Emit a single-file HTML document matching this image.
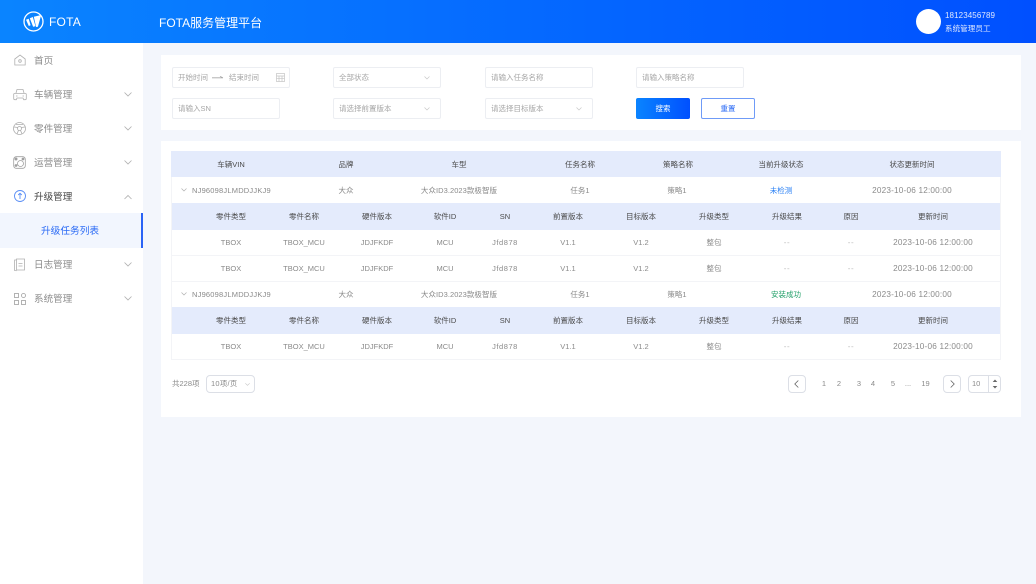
<!DOCTYPE html>
<html lang="zh"><head><meta charset="utf-8"><title>FOTA</title>
<style>
*{box-sizing:border-box}
html,body{margin:0;padding:0}
body{width:1036px;height:584px;overflow:hidden;position:relative;background:#f3f6fc;font-family:"Liberation Sans","Noto Sans CJK SC",sans-serif;color:#8a8a8a}
.a{position:absolute}
.t{position:absolute;white-space:nowrap;line-height:12px;height:12px}
.c{transform:translateX(-50%)}
#hd{left:0;top:0;width:1036px;height:43px;background:linear-gradient(90deg,#0a84ff 0%,#0050ff 100%)}
#sd{left:0;top:43px;width:143px;height:541px;background:#fff}
.m{font-size:9.6px;left:34px;color:#8c8c8c}
.card{background:#fff;left:161px;width:860px}
.f{border:1px solid #eceef2;border-radius:2px;height:21px;background:#fff}
.ph{font-size:7.5px;color:#a6a6a6}
.th{font-size:7.5px;color:#4a4a4a;font-weight:400}
.td{font-size:7.5px;color:#8a8a8a}
.d{font-size:8.2px;letter-spacing:.2px}
.j{letter-spacing:.55px}
.n{color:#bdbdbd;font-size:8px;letter-spacing:.6px}
.bar{left:171px;width:830px;background:#e4ebfc}
.ln{left:171px;width:830px;height:1px;background:#f3f4f7}
svg{position:absolute;overflow:visible;fill:none}
.pg{font-size:7.5px;color:#8a8a8a}
</style></head><body>
<div id="hd" class="a"></div>
<svg style="left:23px;top:11px" width="21" height="21" viewBox="0 0 21 21"><circle cx="10.5" cy="10.5" r="9.5" stroke="#fff" stroke-width="1.3"/><path d="M3 8.700l2.700-.9 1.900 6.500-1.800.7zM6.800 7.300l3-1.300 2.700 9.300-2.400.5zM10.800 5.700l7.400-1.700-3.300 11.800-1.800.2z" fill="#fff"/></svg>
<div class="t" style="left:49px;top:16px;font-size:12px;color:#fff;line-height:13px;height:13px;letter-spacing:.2px">FOTA</div>
<div class="t" style="left:159px;top:15.5px;font-size:12px;color:#fff;line-height:14px;height:14px">FOTA服务管理平台</div>
<div class="a" style="left:916px;top:9px;width:25px;height:25px;border-radius:50%;background:#fff"></div>
<div class="t" style="left:945px;top:10px;font-size:8px;color:#dfe8ff;letter-spacing:.1px">18123456789</div>
<div class="t" style="left:945px;top:22.500px;font-size:7.6px;color:#dfe8ff">系统管理员工</div>

<div id="sd" class="a"></div>
<div class="a" style="left:0;top:213px;width:143px;height:35px;background:#f2f6fe"></div>
<div class="a" style="left:141px;top:213px;width:2px;height:35px;background:#2a63f5"></div>
<div class="t m" style="top:55.500px">首页</div>
<div class="t m" style="top:89.500px">车辆管理</div>
<div class="t m" style="top:123.500px">零件管理</div>
<div class="t m" style="top:157.500px">运营管理</div>
<div class="t m" style="top:191.500px;color:#444">升级管理</div>
<div class="t" style="left:41px;top:225.500px;font-size:9.7px;color:#2a6af5">升级任务列表</div>
<div class="t m" style="top:259.500px">日志管理</div>
<div class="t m" style="top:293.500px">系统管理</div>
<!-- sidebar icons -->
<svg style="left:14px;top:54px" width="12" height="12" viewBox="0 0 12 12" stroke="#b0b0b0" stroke-width=".8"><path d="M.8 5L6 1l5.2 4v6H.8z"/><circle cx="6" cy="7" r="1.3"/></svg>
<svg style="left:13px;top:88px" width="14" height="13" viewBox="0 0 14 13" stroke="#b0b0b0" stroke-width=".8"><path d="M3 5l1-3.500h6L11 5M1.500 5.500h11c.6 0 .8.4.8 1v4c0 .8-.5 1.200-1.200 1.200h-1.400L10 10H4l-.7 1.700H1.900c-.7 0-1.200-.4-1.200-1.200v-4c0-.6.2-1 .8-1z"/><path d="M3 8h1.500M9.500 8H11"/></svg>
<svg style="left:13px;top:122px" width="13" height="13" viewBox="0 0 13 13" stroke="#adadad" stroke-width=".8"><circle cx="6.500" cy="6.500" r="6"/><circle cx="6.500" cy="6.500" r="2"/><path d="M1 5l3.700.5M12 5l-3.700.5M5.500 8.300L4 12M7.500 8.300L9 12M3 2.500h7"/></svg>
<svg style="left:13px;top:156px" width="13" height="13" viewBox="0 0 13 13" stroke="#a0a0a0" stroke-width=".8"><rect x=".7" y=".7" width="11.600" height="11.600" rx="2.500"/><circle cx="7.500" cy="7.500" r="3"/><circle cx="3" cy="3" r="1.100" fill="#a0a0a0"/><circle cx="3" cy="9.500" r="1" fill="#a0a0a0"/><circle cx="10" cy="3" r="1" fill="#a0a0a0"/></svg>
<svg style="left:14px;top:190px" width="12" height="12" viewBox="0 0 12 12" stroke="#5a8ef5" stroke-width=".9"><circle cx="6" cy="6" r="5.500"/><path d="M6 9V3.500M4.200 5L6 3.200 7.800 5"/></svg>
<svg style="left:14px;top:258px" width="11" height="13" viewBox="0 0 11 13" stroke="#b0b0b0" stroke-width=".8"><path d="M2.500 1h8v11h-8zM2.500 2H.6v10.500l2 .2"/><path d="M4.500 5.500h4M4.500 8h4"/></svg>
<svg style="left:14px;top:293px" width="12" height="12" viewBox="0 0 12 12" stroke="#a0a0a0" stroke-width=".8"><rect x=".5" y=".5" width="4" height="4"/><rect x=".5" y="7.500" width="4" height="4"/><circle cx="9.500" cy="2.500" r="2"/><rect x="7.500" y="7.500" width="4" height="4"/></svg>
<!-- chevrons -->
<svg style="left:124px;top:92px" width="8" height="5" stroke="#b0b0b0" stroke-width=".8"><path d="M.5.500L4 4 7.500.500"/></svg>
<svg style="left:124px;top:126px" width="8" height="5" stroke="#b0b0b0" stroke-width=".8"><path d="M.5.500L4 4 7.500.500"/></svg>
<svg style="left:124px;top:160px" width="8" height="5" stroke="#b0b0b0" stroke-width=".8"><path d="M.5.500L4 4 7.500.500"/></svg>
<svg style="left:124px;top:195px" width="8" height="5" stroke="#b0b0b0" stroke-width=".8"><path d="M.5 4L4 .5 7.500 4"/></svg>
<svg style="left:124px;top:262px" width="8" height="5" stroke="#b0b0b0" stroke-width=".8"><path d="M.5.500L4 4 7.500.500"/></svg>
<svg style="left:124px;top:296px" width="8" height="5" stroke="#b0b0b0" stroke-width=".8"><path d="M.5.500L4 4 7.500.500"/></svg>

<!-- filter card -->
<div class="a card" style="top:55px;height:75px"></div>
<div class="a f" style="left:172px;top:67px;width:118px"></div>
<div class="t ph" style="left:178px;top:71.500px">开始时间</div>
<svg style="left:212px;top:76px" width="12" height="3" stroke="#a6a6a6" stroke-width=".8"><path d="M0 1.800h11M8 .3l3 1.500"/></svg>
<div class="t ph" style="left:229px;top:71.500px">结束时间</div>
<svg style="left:276px;top:73px" width="9" height="9" stroke="#c4c4c4" stroke-width=".7"><rect x=".5" y=".5" width="8" height="8"/><path d="M.5 3h8M3 3v5.500M6 3v5.500M.5 5.700h8"/></svg>
<div class="a f" style="left:333px;top:67px;width:108px"></div>
<div class="t ph" style="left:339px;top:71.500px">全部状态</div>
<svg style="left:424px;top:76px" width="6" height="4" stroke="#c8c8c8" stroke-width=".7"><path d="M.5.500L3 3 5.500.500"/></svg>
<div class="a f" style="left:485px;top:67px;width:108px"></div>
<div class="t ph" style="left:491px;top:71.500px">请输入任务名称</div>
<div class="a f" style="left:636px;top:67px;width:108px"></div>
<div class="t ph" style="left:642px;top:71.500px">请输入策略名称</div>
<div class="a f" style="left:172px;top:98px;width:108px"></div>
<div class="t ph" style="left:178px;top:102.500px">请输入SN</div>
<div class="a f" style="left:333px;top:98px;width:108px"></div>
<div class="t ph" style="left:339px;top:102.500px">请选择前置版本</div>
<svg style="left:424px;top:107px" width="6" height="4" stroke="#c8c8c8" stroke-width=".7"><path d="M.5.500L3 3 5.500.500"/></svg>
<div class="a f" style="left:485px;top:98px;width:108px"></div>
<div class="t ph" style="left:491px;top:102.500px">请选择目标版本</div>
<svg style="left:576px;top:107px" width="6" height="4" stroke="#c8c8c8" stroke-width=".7"><path d="M.5.500L3 3 5.500.500"/></svg>
<div class="a" style="left:636px;top:98px;width:54px;height:21px;border-radius:2px;background:linear-gradient(90deg,#0a84ff,#0050ff)"></div>
<div class="t c" style="left:663px;top:102.500px;font-size:7.500px;color:#fff">搜索</div>
<div class="a" style="left:701px;top:98px;width:54px;height:21px;border-radius:2px;background:#fff;border:1px solid #6f9bf7"></div>
<div class="t c" style="left:728px;top:102.500px;font-size:7.500px;color:#2a6af5">重置</div>

<!-- table card -->
<div class="a card" style="top:141px;height:276px"></div>
<div class="a bar" style="top:151px;height:26px"></div>
<div class="a bar" style="top:203px;height:26.500px"></div>
<div class="a bar" style="top:307px;height:26.500px"></div>
<div class="a ln" style="top:255px"></div>
<div class="a ln" style="top:281px"></div>
<div class="a ln" style="top:358.500px"></div>
<div class="a" style="left:171px;top:177px;width:1px;height:182px;background:#f3f4f7"></div>
<div class="a" style="left:1000px;top:177px;width:1px;height:182px;background:#f3f4f7"></div>

<div class="t th c" style="left:231px;top:158.500px">车辆VIN</div>
<div class="t th c" style="left:346px;top:158.500px">品牌</div>
<div class="t th c" style="left:459px;top:158.500px">车型</div>
<div class="t th c" style="left:580px;top:158.500px">任务名称</div>
<div class="t th c" style="left:678px;top:158.500px">策略名称</div>
<div class="t th c" style="left:781px;top:158.500px">当前升级状态</div>
<div class="t th c" style="left:912px;top:158.500px">状态更新时间</div>

<svg style="left:181px;top:188px" width="6" height="4" stroke="#b0b0b0" stroke-width=".7"><path d="M.5.500L3 3 5.500.500"/></svg>
<div class="t td" style="left:192px;top:184.500px;letter-spacing:.2px">NJ96098JLMDDJJKJ9</div>
<div class="t td c" style="left:346px;top:184.500px">大众</div>
<div class="t td c" style="left:459px;top:184.500px;letter-spacing:.05px">大众ID3.2023款极智版</div>
<div class="t td c" style="left:580px;top:184.500px">任务1</div>
<div class="t td c" style="left:677px;top:184.500px">策略1</div>
<div class="t td c" style="left:781px;top:184.500px;color:#2a80f5">未检测</div>
<div class="t td c d" style="left:912px;top:184.500px">2023-10-06 12:00:00</div>

<div class="t th c" style="left:231px;top:210.500px">零件类型</div>
<div class="t th c" style="left:304px;top:210.500px">零件名称</div>
<div class="t th c" style="left:377px;top:210.500px">硬件版本</div>
<div class="t th c" style="left:445px;top:210.500px">软件ID</div>
<div class="t th c" style="left:505px;top:210.500px">SN</div>
<div class="t th c" style="left:568px;top:210.500px">前置版本</div>
<div class="t th c" style="left:641px;top:210.500px">目标版本</div>
<div class="t th c" style="left:714px;top:210.500px">升级类型</div>
<div class="t th c" style="left:787px;top:210.500px">升级结果</div>
<div class="t th c" style="left:851px;top:210.500px">原因</div>
<div class="t th c" style="left:933px;top:210.500px">更新时间</div>

<div class="t td c" style="left:231px;top:236.500px">TBOX</div>
<div class="t td c" style="left:304px;top:236.500px">TBOX_MCU</div>
<div class="t td c" style="left:377px;top:236.500px">JDJFKDF</div>
<div class="t td c" style="left:445px;top:236.500px">MCU</div>
<div class="t td c j" style="left:505px;top:236.500px">Jfd878</div>
<div class="t td c" style="left:568px;top:236.500px">V1.1</div>
<div class="t td c" style="left:641px;top:236.500px">V1.2</div>
<div class="t td c" style="left:714px;top:236.500px">整包</div>
<div class="t td c n" style="left:787px;top:236.500px">--</div>
<div class="t td c n" style="left:851px;top:236.500px">--</div>
<div class="t td c d" style="left:933px;top:236.500px">2023-10-06 12:00:00</div>

<div class="t td c" style="left:231px;top:262.500px">TBOX</div>
<div class="t td c" style="left:304px;top:262.500px">TBOX_MCU</div>
<div class="t td c" style="left:377px;top:262.500px">JDJFKDF</div>
<div class="t td c" style="left:445px;top:262.500px">MCU</div>
<div class="t td c j" style="left:505px;top:262.500px">Jfd878</div>
<div class="t td c" style="left:568px;top:262.500px">V1.1</div>
<div class="t td c" style="left:641px;top:262.500px">V1.2</div>
<div class="t td c" style="left:714px;top:262.500px">整包</div>
<div class="t td c n" style="left:787px;top:262.500px">--</div>
<div class="t td c n" style="left:851px;top:262.500px">--</div>
<div class="t td c d" style="left:933px;top:262.500px">2023-10-06 12:00:00</div>

<svg style="left:181px;top:292px" width="6" height="4" stroke="#b0b0b0" stroke-width=".7"><path d="M.5.500L3 3 5.500.500"/></svg>
<div class="t td" style="left:192px;top:288.500px;letter-spacing:.2px">NJ96098JLMDDJJKJ9</div>
<div class="t td c" style="left:346px;top:288.500px">大众</div>
<div class="t td c" style="left:459px;top:288.500px;letter-spacing:.05px">大众ID3.2023款极智版</div>
<div class="t td c" style="left:580px;top:288.500px">任务1</div>
<div class="t td c" style="left:677px;top:288.500px">策略1</div>
<div class="t td c" style="left:786px;top:288.500px;color:#23a06a">安装成功</div>
<div class="t td c d" style="left:912px;top:288.500px">2023-10-06 12:00:00</div>

<div class="t th c" style="left:231px;top:314.500px">零件类型</div>
<div class="t th c" style="left:304px;top:314.500px">零件名称</div>
<div class="t th c" style="left:377px;top:314.500px">硬件版本</div>
<div class="t th c" style="left:445px;top:314.500px">软件ID</div>
<div class="t th c" style="left:505px;top:314.500px">SN</div>
<div class="t th c" style="left:568px;top:314.500px">前置版本</div>
<div class="t th c" style="left:641px;top:314.500px">目标版本</div>
<div class="t th c" style="left:714px;top:314.500px">升级类型</div>
<div class="t th c" style="left:787px;top:314.500px">升级结果</div>
<div class="t th c" style="left:851px;top:314.500px">原因</div>
<div class="t th c" style="left:933px;top:314.500px">更新时间</div>

<div class="t td c" style="left:231px;top:340.500px">TBOX</div>
<div class="t td c" style="left:304px;top:340.500px">TBOX_MCU</div>
<div class="t td c" style="left:377px;top:340.500px">JDJFKDF</div>
<div class="t td c" style="left:445px;top:340.500px">MCU</div>
<div class="t td c j" style="left:505px;top:340.500px">Jfd878</div>
<div class="t td c" style="left:568px;top:340.500px">V1.1</div>
<div class="t td c" style="left:641px;top:340.500px">V1.2</div>
<div class="t td c" style="left:714px;top:340.500px">整包</div>
<div class="t td c n" style="left:787px;top:340.500px">--</div>
<div class="t td c n" style="left:851px;top:340.500px">--</div>
<div class="t td c d" style="left:933px;top:340.500px">2023-10-06 12:00:00</div>

<!-- pagination -->
<div class="t pg" style="left:172px;top:378px">共228项</div>
<div class="a" style="left:206px;top:375px;width:49px;height:18px;border:1px solid #dcdfe6;border-radius:4px"></div>
<div class="t pg" style="left:211px;top:378px;letter-spacing:.2px">10项/页</div>
<svg style="left:245px;top:383px" width="5" height="3" stroke="#c4c4c4" stroke-width=".6"><path d="M.3.300L2.500 2.300 4.700.300"/></svg>
<div class="a" style="left:788px;top:375px;width:18px;height:18px;border:1px solid #dcdfe6;border-radius:4px"></div>
<svg style="left:794px;top:380px" width="5" height="8" stroke="#666" stroke-width=".8"><path d="M4.300.500L.8 4l3.500 3.500"/></svg>
<div class="t pg c" style="left:824px;top:378px">1</div>
<div class="t pg c" style="left:839px;top:378px">2</div>
<div class="t pg c" style="left:859px;top:378px">3</div>
<div class="t pg c" style="left:873px;top:378px">4</div>
<div class="t pg c" style="left:893px;top:378px">5</div>
<div class="t pg c" style="left:908px;top:378px">...</div>
<div class="t pg c" style="left:925.500px;top:378px">19</div>
<div class="a" style="left:943px;top:375px;width:18px;height:18px;border:1px solid #dcdfe6;border-radius:4px"></div>
<svg style="left:950px;top:380px" width="5" height="8" stroke="#666" stroke-width=".8"><path d="M.7.500L4.200 4 .7 7.500"/></svg>
<div class="a" style="left:968px;top:375px;width:33px;height:18px;border:1px solid #dcdfe6;border-radius:4px"></div>
<div class="a" style="left:988px;top:375px;width:1px;height:18px;background:#dcdfe6"></div>
<div class="t pg" style="left:972px;top:378px">10</div>
<svg style="left:992px;top:379px" width="6" height="10"><path d="M3 .5L5.300 3H.7zM3 9.500L.7 7h4.600z" fill="#666"/></svg>
</body></html>
